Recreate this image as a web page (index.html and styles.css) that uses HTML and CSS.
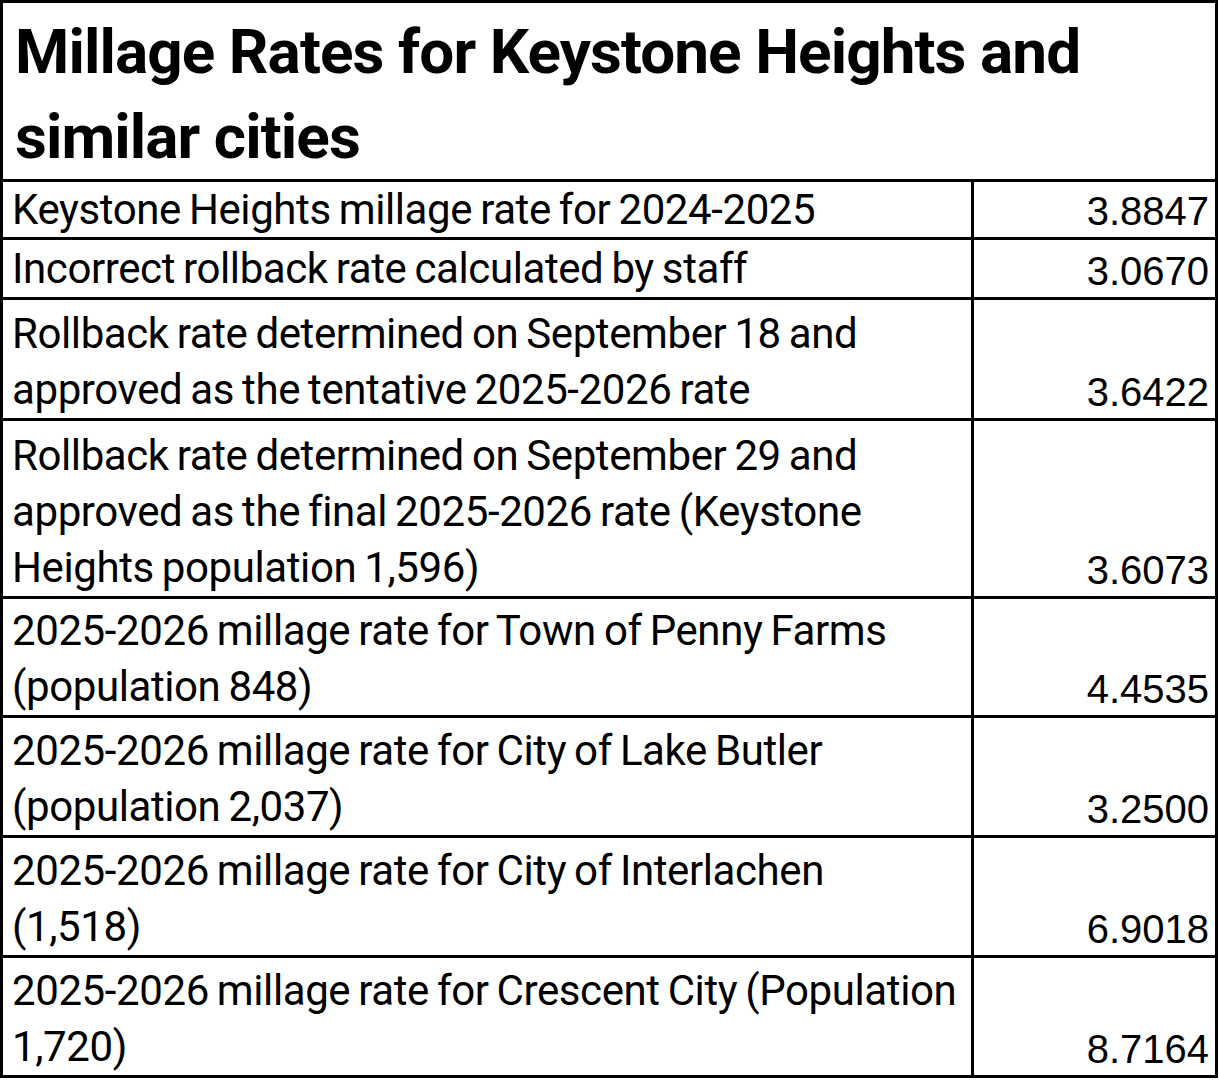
FILE: index.html
```html
<!DOCTYPE html>
<html lang="en">
<head>
<meta charset="utf-8">
<title>Millage Rates for Keystone Heights and similar cities</title>
<link rel="stylesheet" href="styles.css">
</head>
<body>
<div class="sheet">
  <div class="cell title">Millage Rates for Keystone Heights and<br>similar cities</div>

  <div class="cell label r1">Keystone Heights millage rate for 2024-2025</div>
  <div class="cell value r1">3.8847</div>

  <div class="cell label">Incorrect rollback rate calculated by staff</div>
  <div class="cell value">3.0670</div>

  <div class="cell label">Rollback rate determined on September 18 and<br>approved as the tentative 2025-2026 rate</div>
  <div class="cell value">3.6422</div>

  <div class="cell label">Rollback rate determined on September 29 and<br>approved as the final 2025-2026 rate (Keystone<br>Heights population 1,596)</div>
  <div class="cell value">3.6073</div>

  <div class="cell label">2025-2026 millage rate for Town of Penny Farms<br>(population 848)</div>
  <div class="cell value">4.4535</div>

  <div class="cell label">2025-2026 millage rate for City of Lake Butler<br>(population 2,037)</div>
  <div class="cell value">3.2500</div>

  <div class="cell label">2025-2026 millage rate for City of Interlachen<br>(1,518)</div>
  <div class="cell value">6.9018</div>

  <div class="cell label">2025-2026 millage rate for Crescent City (Population<br>1,720)</div>
  <div class="cell value">8.7164</div>
</div>
</body>
</html>
```

FILE: styles.css
```css
html, body {
  margin: 0;
  padding: 0;
  background: #ffffff;
}

.sheet {
  width: 1218px;
  box-sizing: border-box;
  display: grid;
  grid-template-columns: 971px 244px;
  grid-template-rows: 179px 58px 60px 121px 178px 119px 120px 120px 120px;
  border-top: 3px solid #000;
  border-left: 3px solid #000;
  color: #000;
}

.cell {
  box-sizing: border-box;
  border-right: 3px solid #000;
  border-bottom: 3px solid #000;
  display: flex;
  flex-direction: column;
  justify-content: flex-end;
  white-space: nowrap;
  overflow: hidden;
}

.title {
  grid-column: 1 / span 2;
  font-family: Roboto, "Noto Sans", sans-serif;
  font-weight: 700;
  font-size: 62px;
  line-height: 85px;
  letter-spacing: -0.9px;
  padding-left: 12px;
}

.label {
  font-family: Roboto, "Noto Sans", sans-serif;
  font-size: 42px;
  line-height: 56px;
  letter-spacing: -0.4px;
  word-spacing: -2px;
  padding-left: 9px;
}

.value {
  font-family: "Liberation Sans", Arial, sans-serif;
  font-size: 40px;
  line-height: 52px;
  text-align: right;
  align-items: flex-end;
  padding-right: 6px;
}

.r1.label {
  line-height: 54px;
}
```
